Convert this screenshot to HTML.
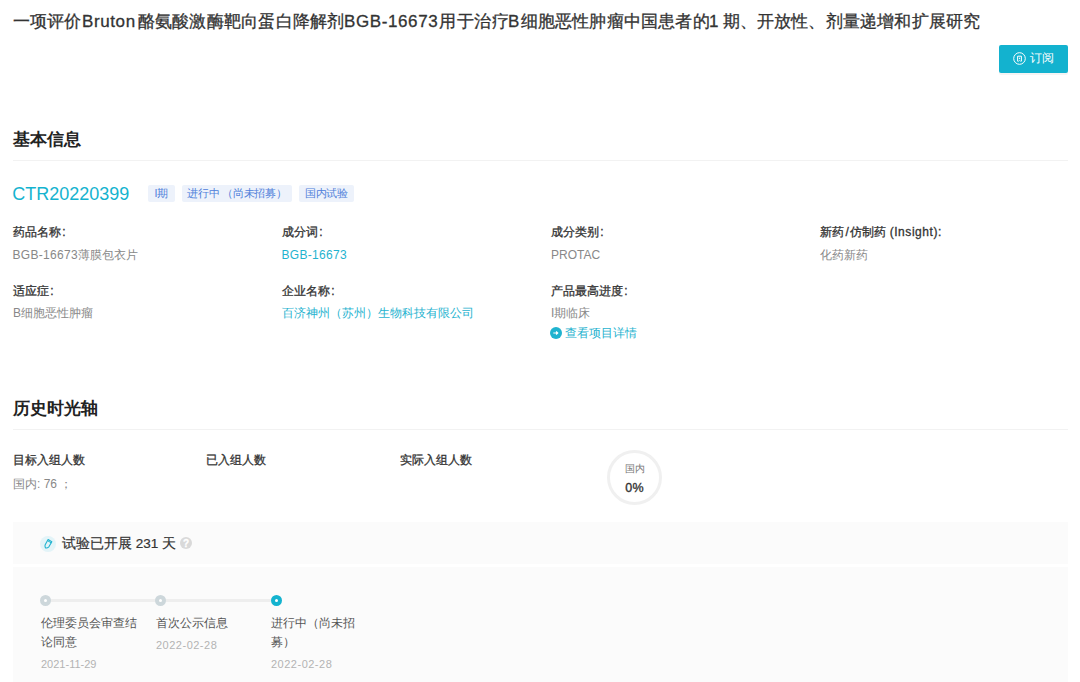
<!DOCTYPE html>
<html><head><meta charset="utf-8">
<style>
*{margin:0;padding:0;box-sizing:border-box}
html,body{width:1080px;height:682px;overflow:hidden;background:#fff}
body{font-family:"Liberation Sans",sans-serif;color:#333;position:relative}
.a{position:absolute;white-space:nowrap}
.title{top:9px;font-size:17px;line-height:26px;color:#333;-webkit-text-stroke:0.3px #333}
.btn{left:999px;top:45px;width:69px;height:28px;background:#13b2cf;border-radius:2px;color:#fff;box-shadow:0 2px 0 rgba(0,0,0,0.045)}
.h{left:13px;font-size:17px;font-weight:700;line-height:26px;color:#222}
.hr{left:12.5px;width:1055.5px;height:1px;background:#f2f2f2}
.ctr{left:12.3px;top:181px;font-size:18px;line-height:26px;color:#14b3cf}
.tag{top:185px;height:17px;background:#edf2fb;border-radius:2px;color:#4f80da;font-size:10.5px;line-height:17px;text-align:center}
.lab{font-size:12px;line-height:18px;color:#333;-webkit-text-stroke:0.3px #333}
.val{font-size:12px;line-height:18px;color:#888}
.lnk{color:#1fb3cf}
.box1{left:13px;top:522px;width:1055px;height:42px;background:#fbfbfb}
.box2{left:13px;top:567px;width:1055px;height:115px;background:#fbfbfb}
.dot{width:11px;height:11px;border-radius:50%;border:4px solid #cdd7db;background:#fff}
.tl{font-size:12px;line-height:19px;color:#555}
.dt{font-size:11px;line-height:16px;color:#b3b3b3;letter-spacing:0.5px}
</style></head><body>
<div class="a title" style="left:13px">一项评价</div>
<div class="a title" style="left:82px;letter-spacing:0.6px">Bruton</div>
<div class="a title" style="left:137.5px;letter-spacing:0.25px">酪氨酸激酶靶向蛋白降解剂</div>
<div class="a title" style="left:344px;letter-spacing:0.6px">BGB-16673</div>
<div class="a title" style="left:439px;letter-spacing:0.5px">用于治疗</div>
<div class="a title" style="left:508px">B</div>
<div class="a title" style="left:520.5px;letter-spacing:0.22px">细胞恶性肿瘤中国患者的</div>
<div class="a title" style="left:709px">1</div>
<div class="a title" style="left:722.5px;letter-spacing:0.2px">期、开放性、剂量递增和扩展研究</div>
<div class="a btn">
  <svg class="a" style="left:14px;top:6.8px" width="13" height="13" viewBox="0 0 13 13"><circle cx="6.5" cy="6.5" r="5.8" fill="none" stroke="#fff" stroke-width="1"/><path d="M4.6 9.2V4.2H8.4V9.2" fill="none" stroke="#fff" stroke-width="1"/><rect x="5.9" y="5.7" width="1.2" height="1.2" fill="#fff"/><path d="M4.6 9.2H5.6L6.5 8.3L7.4 9.2H8.4" fill="none" stroke="#fff" stroke-width="0.8"/></svg>
  <div class="a" style="left:31px;top:4px;font-size:12px;line-height:18px;color:#fff">订阅</div>
</div>

<div class="a h" style="top:127px">基本信息</div>
<div class="a hr" style="top:160px"></div>
<div class="a ctr">CTR20220399</div>
<div class="a tag" style="left:148px;width:27px">I期</div>
<div class="a tag" style="left:182px;width:110px;letter-spacing:-0.25px;text-indent:-0.25px">进行中 （尚未招募）</div>
<div class="a tag" style="left:299px;width:55px;letter-spacing:-0.3px;text-indent:-0.3px">国内试验</div>

<div class="a lab" style="left:13px;top:223px">药品名称<span style="margin-left:1.2px">:</span></div>
<div class="a val" style="left:12.5px;top:246px"><span style="letter-spacing:0.3px">BGB-16673</span>薄膜包衣片</div>
<div class="a lab" style="left:282px;top:223px">成分词<span style="margin-left:1.2px">:</span></div>
<div class="a val lnk" style="left:281.5px;top:246px;letter-spacing:0.3px">BGB-16673</div>
<div class="a lab" style="left:551px;top:223px">成分类别<span style="margin-left:1.2px">:</span></div>
<div class="a val" style="left:551px;top:246px">PROTAC</div>
<div class="a lab" style="left:820px;top:223px">新药<span style="padding:0 1.5px">/</span>仿制药 <span style="letter-spacing:0.55px">(Insight):</span></div>
<div class="a val" style="left:820px;top:246px">化药新药</div>

<div class="a lab" style="left:13px;top:282px">适应症<span style="margin-left:1.2px">:</span></div>
<div class="a val" style="left:13px;top:304px">B细胞恶性肿瘤</div>
<div class="a lab" style="left:282px;top:282px">企业名称<span style="margin-left:1.2px">:</span></div>
<div class="a val lnk" style="left:282px;top:304px">百济神州（苏州）生物科技有限公司</div>
<div class="a lab" style="left:551px;top:282px">产品最高进度<span style="margin-left:1.2px">:</span></div>
<div class="a val" style="left:551px;top:304px">I期临床</div>
<svg class="a" style="left:550px;top:327px" width="12" height="12" viewBox="0 0 12 12"><circle cx="6" cy="6" r="6" fill="#1fb3cf"/><path d="M3.3 6H7.6M6.1 4.5L7.7 6L6.1 7.5" fill="none" stroke="#fff" stroke-width="1.2"/></svg>
<div class="a val lnk" style="left:565px;top:324px">查看项目详情</div>

<div class="a h" style="top:396px">历史时光轴</div>
<div class="a hr" style="top:429px"></div>

<div class="a lab" style="left:13px;top:451px">目标入组人数</div>
<div class="a val" style="left:13px;top:475px">国内: 76 ；</div>
<div class="a lab" style="left:206px;top:451px">已入组人数</div>
<div class="a lab" style="left:400px;top:451px">实际入组人数</div>

<div class="a" style="left:607px;top:450px;width:55px;height:55px;border-radius:50%;border:3px solid #f0f0f0"></div>
<div class="a" style="left:607px;top:461px;width:55px;text-align:center;font-size:10px;line-height:16px;color:#777">国内</div>
<div class="a" style="left:607px;top:480px;width:55px;text-align:center;font-size:12.5px;line-height:16px;color:#333;-webkit-text-stroke:0.35px #333;letter-spacing:0.3px">0%</div>

<div class="a box1">
  <div class="a" style="left:27px;top:14px;width:16px;height:16px;border-radius:50%;background:#e3f4f8"></div>
  <svg class="a" style="left:30px;top:17px" width="10" height="10" viewBox="0 0 10 10"><path d="M5.1 0.6L8.8 2.7L5.9 7.8Q4.3 9.3 2.6 8.9Q1.7 7.5 2.2 5.7Z" fill="none" stroke="#1fb3cf" stroke-width="1.1" stroke-linejoin="round"/><path d="M4.5 1.7L8.2 3.8" stroke="#1fb3cf" stroke-width="1"/></svg>
  <div class="a" style="left:49px;top:12px;font-size:13.5px;line-height:20px;color:#333;-webkit-text-stroke:0.2px #333">试验已开展 231 天</div>
  <div class="a" style="left:167px;top:15px;width:12px;height:12px;border-radius:50%;background:#d9d9d9;color:#fff;font-size:10px;line-height:13.5px;text-align:center;font-weight:700;-webkit-text-stroke:0.3px #fff">?</div>
</div>
<div class="a box2">
  <div class="a" style="left:32px;top:32px;width:231px;height:3px;background:#eeeeee"></div>
  <div class="a dot" style="left:26.8px;top:27.8px"></div>
  <div class="a dot" style="left:141.7px;top:27.8px"></div>
  <div class="a dot" style="left:257.7px;top:27.8px;border-color:#14b3cf"></div>
  <div class="a tl" style="left:28px;top:47px">伦理委员会审查结<br>论同意</div>
  <div class="a dt" style="left:28px;top:89px;letter-spacing:0">2021-11-29</div>
  <div class="a tl" style="left:143px;top:47px">首次公示信息</div>
  <div class="a dt" style="left:143px;top:70px">2022-02-28</div>
  <div class="a tl" style="left:258px;top:47px">进行中（尚未招<br>募）</div>
  <div class="a dt" style="left:258px;top:89px">2022-02-28</div>
</div>
</body></html>
